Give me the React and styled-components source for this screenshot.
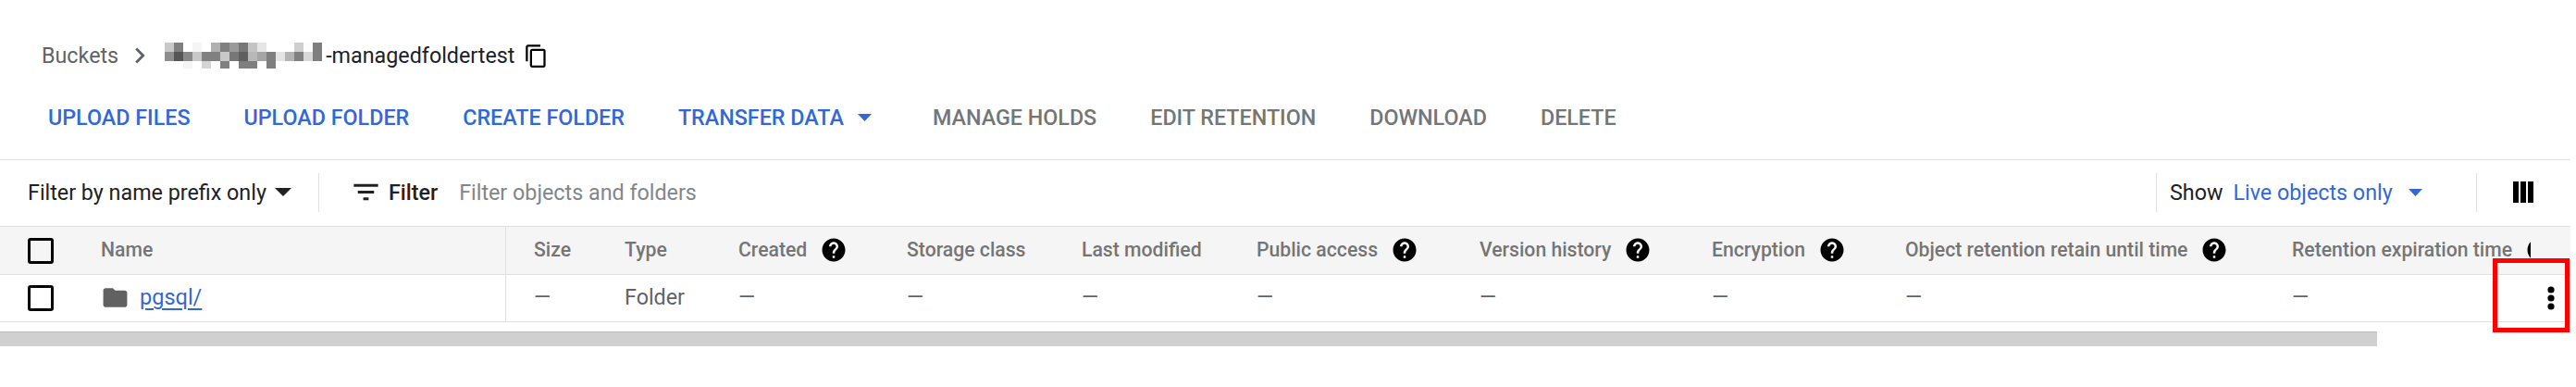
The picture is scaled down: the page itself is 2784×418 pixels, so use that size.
import React from "react"
import styled, { createGlobalStyle } from "styled-components"
import { MdChevronRight, MdContentCopy, MdFilterList, MdFolder, MdHelp } from "react-icons/md"

const GlobalStyle = createGlobalStyle`
  html, body {
    margin: 0;
    background: #ffffff;
  }
  body {
    font-family: Roboto, "Liberation Sans", sans-serif;
    color: #202124;
  }
`

const BLUE = "#3367d6"
const LINE = "#e0e0e0"
const GRID = "109px 438px 128px 123px 182px 189px 189px 241px 251px 209px 418px 258px 43px"

// redacted part of the bucket name, one row per mosaic line
const MOSAIC = [
  ["c8", "7f", "ff", "f5", "ff", "b0", "80", "9a", "77", "c4", "e6", "ff", "ff", "ff", "cf", "fc", "7f"],
  ["8e", "55", "88", "c8", "80", "80", "c8", "77", "5f", "b8", "a5", "7f", "e4", "b4", "80", "d8", "7f"],
  ["ff", "ff", "f5", "ff", "d4", "ff", "80", "ff", "7f", "7f", "ff", "7f", "ff", "ff", "ff", "ff", "ff"],
]

const COLUMNS = [
  { label: "Size", inset: true },
  { label: "Type" },
  { label: "Created", help: true },
  { label: "Storage class" },
  { label: "Last modified" },
  { label: "Public access", help: true },
  { label: "Version history", help: true },
  { label: "Encryption", help: true },
  { label: "Object retention retain until time", help: true },
  { label: "Retention expiration time", help: true },
]

const Page = styled.div`
  position: relative;
  width: 2778px;
  min-height: 418px;
`

const Breadcrumb = styled.div`
  display: flex;
  align-items: center;
  height: 32px;
  padding: 44px 0 0 45px;
  font-size: 23.3px;
  color: #5f6368;
`

const BucketName = styled.span`
  color: #202124;
`

const ActionBar = styled.div`
  display: flex;
  align-items: center;
  gap: 58px;
  box-sizing: border-box;
  height: 97px;
  padding: 5px 0 0 52px;
  border-bottom: 1px solid ${LINE};
`

const ActionButton = styled.span`
  display: inline-flex;
  align-items: center;
  gap: 15px;
  font-size: 23.3px;
  font-weight: 500;
  color: ${({ $disabled }) => ($disabled ? "#757575" : BLUE)};
`

const MenuButton = styled(ActionButton)`
  margin-right: 8px;
`

const FilterBar = styled.div`
  display: flex;
  align-items: center;
  height: 71px;
  box-sizing: border-box;
  padding-bottom: 2px;
  font-size: 23.3px;
`

const PrefixSelect = styled.span`
  display: inline-flex;
  align-items: center;
  gap: 9px;
  width: 314px;
  padding-left: 30px;
`

const BarDivider = styled.span`
  width: 1px;
  height: 42px;
  background: ${LINE};
`

const FilterLabel = styled.span`
  display: inline-flex;
  align-items: center;
  gap: 7px;
  margin-left: 33px;
  font-weight: 500;
`

const FilterInput = styled.span`
  flex: 1;
  margin-left: 23px;
  color: #80868b;
`

const ShowSelect = styled.span`
  display: inline-flex;
  align-items: center;
  width: 345px;
  padding-left: 14px;
  box-sizing: border-box;
`

const ShowValue = styled.span`
  display: inline-flex;
  align-items: center;
  gap: 17px;
  margin-left: 11px;
  color: ${BLUE};
`

const ColumnsButton = styled.span`
  display: inline-flex;
  width: 101px;
  padding-left: 39px;
  box-sizing: border-box;
`

const HeaderRow = styled.div`
  display: grid;
  grid-template-columns: ${GRID};
  height: 53px;
  box-sizing: border-box;
  background: #f5f5f5;
  border-top: 1px solid ${LINE};
  border-bottom: 1px solid ${LINE};
  font-size: 21.2px;
  font-weight: 500;
  color: #757575;
`

const BodyRow = styled.div`
  display: grid;
  grid-template-columns: ${GRID};
  height: 51px;
  box-sizing: border-box;
  border-bottom: 1px solid ${LINE};
  font-size: 23.3px;
  color: #5f6368;
`

const Cell = styled.div`
  display: flex;
  align-items: center;
  min-width: 0;
  overflow: hidden;
  white-space: nowrap;
  padding-bottom: 2px;
  padding-left: ${({ $inset }) => ($inset ? "30px" : "0")};
`

const SelectCell = styled(Cell)`
  padding: 0 0 0 30px;
`

const NameCell = styled(Cell)`
  border-right: 1px solid ${LINE};
`

const HelpIcon = styled(MdHelp)`
  flex: none;
  width: 30px;
  height: 30px;
  margin-left: 14px;
  color: #000000;
`

const Checkbox = styled.span`
  display: block;
  width: 28px;
  height: 28px;
  box-sizing: border-box;
  border: 3px solid #000000;
  border-radius: 3px;
`

const FolderIcon = styled(MdFolder)`
  width: 31px;
  height: 31px;
  color: #616161;
`

const FolderLink = styled.a`
  margin-left: 11px;
  font-size: 23.5px;
  color: ${BLUE};
  text-decoration: underline;
  text-underline-offset: 4px;
`

const ActionsCell = styled(Cell)`
  justify-content: center;
  overflow: visible;
  padding: 0;
`

const ScrollTrack = styled.div`
  width: 2569px;
  height: 16px;
  margin-top: 10px;
  box-sizing: border-box;
  background: #d0d0d0;
  border-top: 1px solid #bdbdbd;
`

const Highlight = styled.div`
  position: absolute;
  left: 2694px;
  top: 279px;
  width: 83px;
  height: 80px;
  box-sizing: border-box;
  border: 5px solid #ff0000;
`

const Caret = ({ width = 15, height = 8 }) => (
  <svg width={width} height={height} viewBox="0 0 10 5" preserveAspectRatio="none" fill="currentColor">
    <path d="M0 0h10L5 5z" />
  </svg>
)

const Mosaic = () => (
  <svg width="174" height="28" viewBox="0 0 174 28" shapeRendering="crispEdges">
    {MOSAIC.map((row, r) =>
      row.map((shade, c) => (
        <rect key={`${r}-${c}`} x={c * 10} y={r * 10} width="10" height={r === 2 ? 8 : 10} fill={`#${shade}${shade}${shade}`} />
      ))
    )}
  </svg>
)

const ColumnsIcon = () => (
  <svg width="22" height="23" viewBox="0 0 22 23" fill="#000000">
    <rect x="0" width="6" height="23" />
    <rect x="8" width="6" height="23" />
    <rect x="16" width="6" height="23" />
  </svg>
)

const KebabIcon = () => (
  <svg width="8" height="26" viewBox="0 0 8 26" fill="#000000">
    <circle cx="4" cy="4" r="3.6" />
    <circle cx="4" cy="13" r="3.6" />
    <circle cx="4" cy="22" r="3.6" />
  </svg>
)

const App = () => (
  <Page>
    <GlobalStyle />
    <Breadcrumb>
      Buckets
      <MdChevronRight size={34} style={{ margin: "0 10px 0 6px" }} />
      <Mosaic />
      <BucketName>-managedfoldertest</BucketName>
      <MdContentCopy size={27} color="#000000" style={{ marginLeft: 10 }} />
    </Breadcrumb>

    <ActionBar>
      <ActionButton>UPLOAD FILES</ActionButton>
      <ActionButton>UPLOAD FOLDER</ActionButton>
      <ActionButton>CREATE FOLDER</ActionButton>
      <MenuButton>
        TRANSFER DATA
        <Caret />
      </MenuButton>
      <ActionButton $disabled>MANAGE HOLDS</ActionButton>
      <ActionButton $disabled>EDIT RETENTION</ActionButton>
      <ActionButton $disabled>DOWNLOAD</ActionButton>
      <ActionButton $disabled>DELETE</ActionButton>
    </ActionBar>

    <FilterBar>
      <PrefixSelect>
        Filter by name prefix only
        <Caret width={18} height={9} />
      </PrefixSelect>
      <BarDivider />
      <FilterLabel>
        <MdFilterList size={35} />
        Filter
      </FilterLabel>
      <FilterInput>Filter objects and folders</FilterInput>
      <BarDivider />
      <ShowSelect>
        Show
        <ShowValue>
          Live objects only
          <Caret />
        </ShowValue>
      </ShowSelect>
      <BarDivider />
      <ColumnsButton>
        <ColumnsIcon />
      </ColumnsButton>
    </FilterBar>

    <HeaderRow>
      <SelectCell>
        <Checkbox />
      </SelectCell>
      <NameCell>Name</NameCell>
      {COLUMNS.map(({ label, inset, help }) => (
        <Cell key={label} $inset={inset}>
          {label}
          {help && <HelpIcon />}
        </Cell>
      ))}
      <Cell />
    </HeaderRow>

    <BodyRow>
      <SelectCell>
        <Checkbox />
      </SelectCell>
      <NameCell>
        <FolderIcon />
        <FolderLink>pgsql/</FolderLink>
      </NameCell>
      <Cell $inset>—</Cell>
      <Cell>Folder</Cell>
      {COLUMNS.slice(2).map(({ label }) => (
        <Cell key={label}>—</Cell>
      ))}
      <ActionsCell>
        <KebabIcon />
      </ActionsCell>
    </BodyRow>

    <ScrollTrack />
    <Highlight />
  </Page>
)

export default App
